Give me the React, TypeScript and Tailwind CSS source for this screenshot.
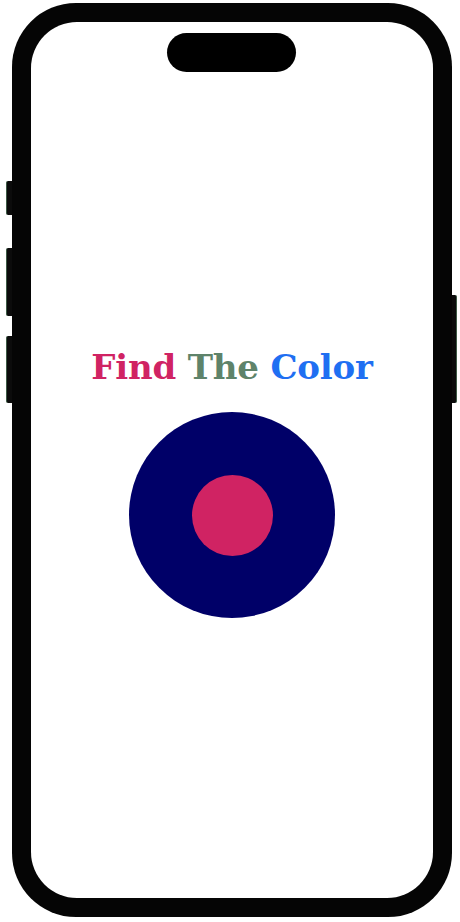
export default function App() {
  return (
    <div className="w-[460px] h-[922px] bg-white pt-[3px] pl-[12px]">
      {/* Phone frame */}
      <div className="relative w-[440px] h-[914px] rounded-[64px] bg-[#050505] p-[19px]">
        {/* side buttons */}
        <div className="absolute left-[-6px] top-[178px] w-[6px] h-[34px] rounded-l-[2px] bg-[#0b0b0b] border-l border-[#3d5a45]" />
        <div className="absolute left-[-6px] top-[245px] w-[6px] h-[68px] rounded-l-[2px] bg-[#0b0b0b] border-l border-[#3d5a45]" />
        <div className="absolute left-[-6px] top-[333px] w-[6px] h-[67px] rounded-l-[2px] bg-[#0b0b0b] border-l border-[#3d5a45]" />
        <div className="absolute right-[-5px] top-[292px] w-[5px] h-[108px] rounded-r-[2px] bg-[#0b0b0b] border-r border-[#3d5a45]" />

        {/* Screen */}
        <div className="relative h-full w-full rounded-[46px] bg-white flex flex-col items-center">
          {/* Dynamic island */}
          <div className="absolute top-[11px] left-[136px] w-[129px] h-[39px] rounded-full bg-black" />

          <h1
            className="mt-[324px] text-[34px] font-bold leading-[42px] tracking-[-0.2px]"
            style={{ fontFamily: '"DejaVu Serif", serif' }}
          >
            <span className="text-[#d02363]">Find</span>{" "}
            <span className="text-[#5e836a]">The</span>{" "}
            <span className="text-[#1f6ff2]">Color</span>
          </h1>

          <div className="mt-[24px] w-[206px] h-[206px] rounded-full bg-[#000068] flex items-center justify-center">
            <div className="w-[81px] h-[81px] rounded-full bg-[#d02363]" />
          </div>
        </div>
      </div>
    </div>
  );
}
